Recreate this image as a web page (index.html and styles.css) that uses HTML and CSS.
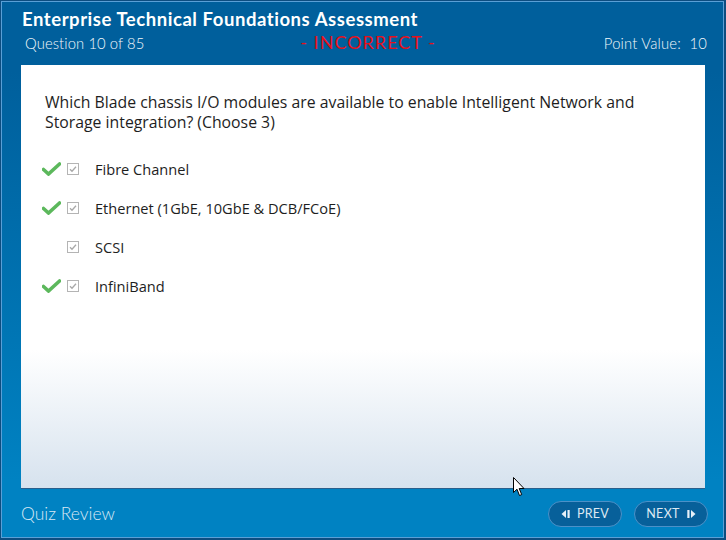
FILE: index.html
```html
<!DOCTYPE html>
<html>
<head>
<meta charset="utf-8">
<link rel="stylesheet" href="styles.css">
</head>
<body>
<div class="app">
  <div class="frame">
    <header class="header">
      <h1 class="title">Enterprise Technical Foundations Assessment</h1>
      <div class="subbar">
        <span class="qnum">Question 10 of 85</span>
        <span class="status">- INCORRECT -</span>
        <span class="points">Point Value:&nbsp; 10</span>
      </div>
    </header>
    <main class="panel">
      <p class="question">Which Blade chassis I/O modules are available to enable Intelligent Network and Storage integration? (Choose 3)</p>
      <ul class="options">
        <li class="option">
          <span class="mark"><svg width="19" height="14" viewBox="0 0 19 14"><path d="M1.5 7.5 L6.5 12 L17.5 2" fill="none" stroke="#5cb85c" stroke-width="3.6" stroke-linejoin="miter" stroke-linecap="round"/></svg></span>
          <span class="box"><svg width="12" height="12" viewBox="0 0 12 12"><rect x="0.5" y="0.5" width="11" height="11" fill="#fff" stroke="#b4b4b4"/><path d="M3 6.2 L5 8.2 L9 3.8" fill="none" stroke="#a8a8a8" stroke-width="1.3"/></svg></span>
          <span class="label">Fibre Channel</span>
        </li>
        <li class="option">
          <span class="mark"><svg width="19" height="14" viewBox="0 0 19 14"><path d="M1.5 7.5 L6.5 12 L17.5 2" fill="none" stroke="#5cb85c" stroke-width="3.6" stroke-linejoin="miter" stroke-linecap="round"/></svg></span>
          <span class="box"><svg width="12" height="12" viewBox="0 0 12 12"><rect x="0.5" y="0.5" width="11" height="11" fill="#fff" stroke="#b4b4b4"/><path d="M3 6.2 L5 8.2 L9 3.8" fill="none" stroke="#a8a8a8" stroke-width="1.3"/></svg></span>
          <span class="label">Ethernet (1GbE, 10GbE &amp; DCB/FCoE)</span>
        </li>
        <li class="option">
          <span class="mark"></span>
          <span class="box"><svg width="12" height="12" viewBox="0 0 12 12"><rect x="0.5" y="0.5" width="11" height="11" fill="#fff" stroke="#b4b4b4"/><path d="M3 6.2 L5 8.2 L9 3.8" fill="none" stroke="#a8a8a8" stroke-width="1.3"/></svg></span>
          <span class="label">SCSI</span>
        </li>
        <li class="option">
          <span class="mark"><svg width="19" height="14" viewBox="0 0 19 14"><path d="M1.5 7.5 L6.5 12 L17.5 2" fill="none" stroke="#5cb85c" stroke-width="3.6" stroke-linejoin="miter" stroke-linecap="round"/></svg></span>
          <span class="box"><svg width="12" height="12" viewBox="0 0 12 12"><rect x="0.5" y="0.5" width="11" height="11" fill="#fff" stroke="#b4b4b4"/><path d="M3 6.2 L5 8.2 L9 3.8" fill="none" stroke="#a8a8a8" stroke-width="1.3"/></svg></span>
          <span class="label">InfiniBand</span>
        </li>
      </ul>
    </main>
    <footer class="footer">
      <span class="review">Quiz Review</span>
      <div class="nav">
        <button class="btn"><svg width="10" height="10" viewBox="0 0 10 10"><path d="M0.5 5 L5 1 L5 9 Z" fill="#e6f0f8"/><rect x="6.5" y="1" width="2.2" height="8" fill="#e6f0f8"/></svg>PREV</button>
        <button class="btn">NEXT<svg width="10" height="10" viewBox="0 0 10 10"><rect x="1.3" y="1" width="2.2" height="8" fill="#e6f0f8"/><path d="M5 1 L9.5 5 L5 9 Z" fill="#e6f0f8"/></svg></button>
      </div>
    </footer>
  </div>
  <svg class="cursor" width="12" height="20" viewBox="0 0 12 20"><path d="M0.5 0.5 L0.5 15.5 L4 12.2 L6.5 18.5 L8.7 17.6 L6.2 11.5 L11 11.5 Z" fill="#fff" stroke="#000" stroke-width="1"/></svg>
</div>
</body>
</html>
```

FILE: styles.css
```css
* { box-sizing: border-box; }
html, body { margin: 0; padding: 0; }
body { width: 726px; height: 540px; overflow: hidden; background: #fff; }

.app {
  position: relative;
  width: 726px;
  height: 540px;
  border: 1px solid #0d4d80;
  border-right-width: 2px;
  border-bottom-width: 2px;
  background: linear-gradient(#005f9c 0px, #005f9c 70px, #0082c2 480px, #0082c2 100%);
}

.frame {
  width: 100%;
  height: 100%;
  border: 1px solid #5a9fd6;
  display: flex;
  flex-direction: column;
}

.header {
  height: 63px;
  padding: 0 16px 0 20px;
  color: #fff;
  font-family: Lato, "Liberation Sans", sans-serif;
}

.title {
  margin: 0;
  padding-top: 6px;
  font-size: 18.5px;
  font-weight: 700;
  line-height: 23px;
  letter-spacing: 0.55px;
}

.subbar {
  display: grid;
  grid-template-columns: 1fr auto 1fr;
  align-items: center;
  height: 24px;
  padding-left: 3px;
  font-size: 14.8px;
  font-weight: 300;
  color: #f2f7fb;
}

.qnum { justify-self: start; letter-spacing: 0.1px; }

.points { justify-self: end; letter-spacing: 0.2px; }

.status {
  color: #e8101a;
  font-size: 18px;
  letter-spacing: 1px;
  font-weight: 400;
  margin-top: -2px;
  margin-left: 4px;
  white-space: pre;
}

.panel {
  height: 424px;
  margin: 0 18px 0 19px;
  background: linear-gradient(#ffffff 0px, #ffffff 285px, #d6e2ee 424px);
  border-bottom: 1px solid #2b5f8c;
  padding: 27px 40px 0 24px;
  font-family: "Open Sans", "Noto Sans", sans-serif;
  color: #1e1e1e;
}

.question {
  margin: 0;
  font-size: 15.8px;
  line-height: 20px;
}

.options {
  list-style: none;
  margin: 17px 0 0 0;
  padding: 0;
}

.option {
  display: flex;
  align-items: center;
  height: 39px;
  font-size: 14.6px;
}

.mark {
  width: 25px;
  margin-left: -3px;
  display: flex;
  align-items: center;
}

.box {
  width: 28px;
  display: flex;
  align-items: center;
}

.footer {
  flex: 1;
  display: flex;
  align-items: center;
  justify-content: space-between;
  padding: 0 15px 0 19px;
}

.review {
  font-family: Lato, "Liberation Sans", sans-serif;
  font-weight: 300;
  font-size: 17.5px;
  color: #d9e8f4;
  margin-top: 1px;
}

.nav {
  display: flex;
  gap: 12px;
  margin-top: 1px;
}

.btn {
  display: flex;
  align-items: center;
  justify-content: center;
  gap: 6px;
  width: 74px;
  height: 26px;
  border-radius: 13px;
  border: 1px solid #4c91c8;
  background: #07609a;
  color: #dde9f3;
  font-family: Lato, "Liberation Sans", sans-serif;
  font-size: 12.5px;
  font-weight: 400;
  letter-spacing: 0.3px;
  padding: 0;
}

.cursor {
  position: absolute;
  left: 512px;
  top: 476px;
}
```
